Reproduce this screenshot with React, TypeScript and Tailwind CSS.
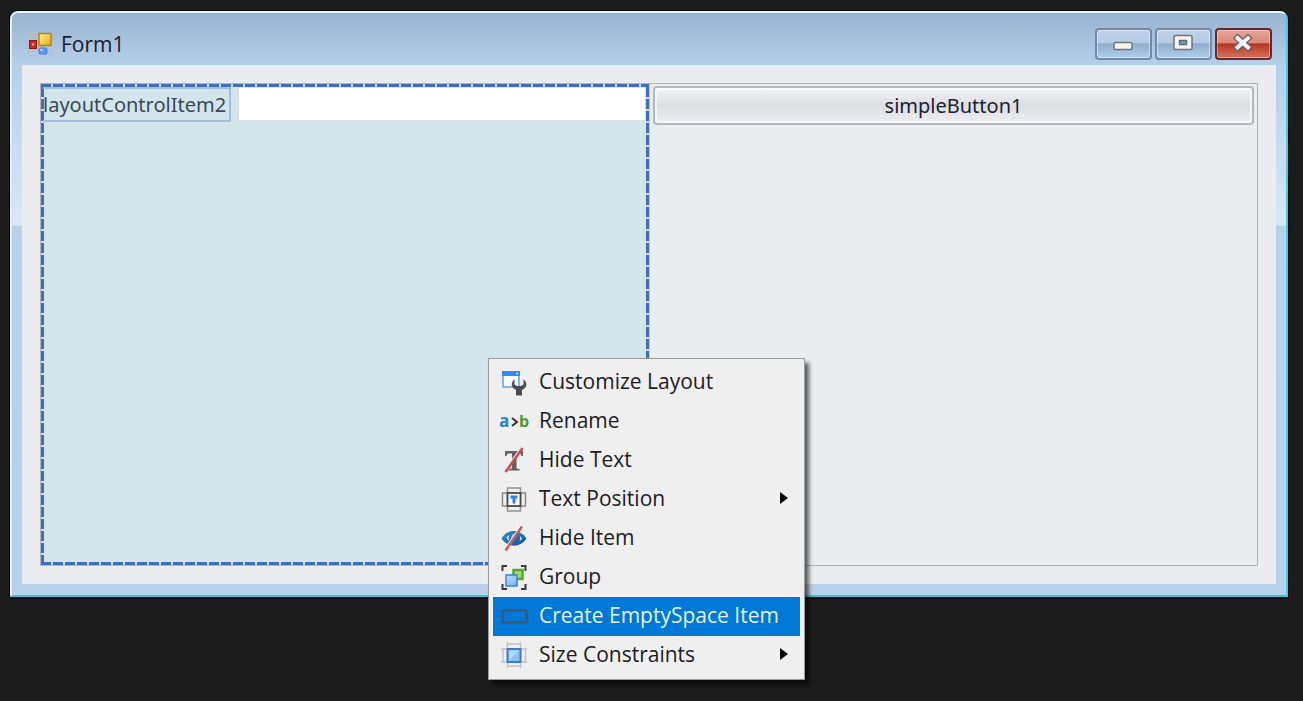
import type { ReactNode } from "react";

const FormIcon = () => (
  <svg width="24" height="24" viewBox="0 0 24 24" aria-hidden="true">
    <defs>
      <linearGradient id="form-yellow" x1="0" y1="0" x2="1" y2="1">
        <stop offset="0" stopColor="#fff0a0" />
        <stop offset="1" stopColor="#e9ab00" />
      </linearGradient>
    </defs>
    <path d="M.5 10V.5H10M.5 17v6.500H11M20 23.500h3.500V14" fill="none" stroke="#b9bcc0" strokeWidth="1" />
    <rect x="1.500" y="8.500" width="7" height="8" fill="#d8281c" stroke="#8f1510" />
    <rect x="4" y="11.500" width="2" height="2" fill="#f7b9a8" />
    <rect x="11" y="1.500" width="12" height="12" fill="url(#form-yellow)" stroke="#b98300" strokeWidth="1.500" />
    <rect x="11" y="16" width="8" height="6" rx="1" fill="#5d93ea" stroke="#4a7cd6" />
    <path d="M12 18h3" stroke="#c2dafc" strokeWidth="1.500" />
  </svg>
);

const CustomizeIcon = () => (
  <svg width="28" height="28" viewBox="0 0 28 28" aria-hidden="true">
    <rect x="3" y="4" width="16" height="15" fill="#f5faff" stroke="#5ba3f5" strokeWidth="1.500" />
    <path d="M2 3h18v5H2z" fill="#2f8bf2" />
    <path d="M16 5.500h2" stroke="#cfe5ff" strokeWidth="1.500" />
    <path
      d="M14.500 11.500c-3 2-3.500 6-1.500 8.200 1 1.100 2 1.800 3 2.300V27.500h6V22c1.200-.5 2.200-1.200 3.200-2.300 2-2.200 1.500-6.200-1.700-8.200v5l-2.500 1.500h-4l-2.500-1.500z"
      fill="#4c4c4e"
    />
  </svg>
);

const RenameIcon = () => (
  <svg width="30" height="28" viewBox="0 0 30 28" aria-hidden="true" className="font-['Open_Sans',sans-serif] font-bold">
    <text x="-1" y="20" fontSize="17" fill="#2480e8">a</text>
    <path d="M12 11l5 4-5 4" fill="none" stroke="#333" strokeWidth="2" />
    <text x="19" y="20" fontSize="16" fill="#4c9c2e">b</text>
  </svg>
);

const HideTextIcon = () => (
  <svg width="28" height="28" viewBox="0 0 28 28" aria-hidden="true">
    <path d="M5 5h18v5h-1.500c-.3-2-1-2.500-3-2.500h-2V21c0 1.500.5 2 3 2v1.500H9V23c2.500 0 3-.5 3-2V7.500H9.500c-2 0-2.700.5-3 2.500H5z" fill="#606062" />
    <path d="M21 2L4 26" stroke="#efefef" strokeWidth="2" />
    <path d="M22.500 2L5.500 26" stroke="#d24a4e" strokeWidth="2.500" />
  </svg>
);

const TextPositionIcon = () => (
  <svg width="28" height="28" viewBox="0 0 28 28" aria-hidden="true" fill="none">
    <rect x="7.500" y="3" width="13" height="23" stroke="#929292" strokeWidth="1.500" />
    <rect x="2.500" y="8" width="23" height="13" stroke="#8a8a8a" strokeWidth="1.500" />
    <rect x="7.500" y="8" width="13" height="13" fill="#f7f7f7" stroke="#4a4a4a" strokeWidth="1.800" />
    <path d="M10.500 10.500h7v3h-2v5h-3v-5h-2z" fill="#2682ee" />
  </svg>
);

const HideItemIcon = () => (
  <svg width="28" height="28" viewBox="0 0 28 28" aria-hidden="true">
    <defs>
      <linearGradient id="eye-blue" x1="0" y1="0" x2="1" y2="1">
        <stop offset="0" stopColor="#2c93d8" />
        <stop offset="1" stopColor="#174d91" />
      </linearGradient>
    </defs>
    <path d="M1.500 14.500C7 4.500 20 4.500 26.500 14.500 20.500 24 7.500 24 1.500 14.500z" fill="url(#eye-blue)" />
    <path d="M6.500 13.500c.7-1.200 1.700-2 2.700-2.500-.7 2-.7 4 0 5.800-1.200-.7-2.200-1.800-2.700-3.300zM22 14.500c-.6-1.300-1.300-2-2.200-2.600.5 1.700.4 3.500-.3 5 1.100-.5 1.900-1.300 2.500-2.400z" fill="#dceefb" />
    <path d="M12 11.500c1-1.500 2.500-2 3.500-1.500l-4 5c-.3-1.300 0-2.500.5-3.500z" fill="#a9d2f3" />
    <path d="M20.500 2.500L4 26" stroke="#efefef" strokeWidth="1.500" />
    <path d="M22 2.500L5.500 26.500" stroke="#ce5a60" strokeWidth="2.500" />
  </svg>
);

const GroupIcon = () => (
  <svg width="28" height="28" viewBox="0 0 28 28" aria-hidden="true">
    <defs>
      <linearGradient id="group-blue" x1="0" y1="0" x2="1" y2="1">
        <stop offset="0" stopColor="#c5e2ff" />
        <stop offset="1" stopColor="#6db0fb" />
      </linearGradient>
    </defs>
    <path d="M7 3H2.500v5M21 3h4.500v5M2.500 21v5H7M25.500 21v5H21" fill="none" stroke="#3b3b3b" strokeWidth="2" />
    <rect x="13.500" y="7" width="9" height="9" fill="#a5dc68" stroke="#55ad25" strokeWidth="2.500" />
    <rect x="6" y="12" width="11" height="11" fill="url(#group-blue)" stroke="#3e7fd6" strokeWidth="1.500" />
  </svg>
);

const EmptySpaceIcon = () => (
  <svg width="28" height="28" viewBox="0 0 28 28" aria-hidden="true">
    <rect x="2.500" y="8.500" width="24" height="12" fill="none" stroke="#3c566f" strokeWidth="2" />
  </svg>
);

const SizeIcon = () => (
  <svg width="28" height="28" viewBox="0 0 28 28" aria-hidden="true">
    <path d="M7.500 1v26M20.500 1v26M7.500 3h13M7.500 25h13M1 8h26M1 21h26M3 8v13M25.500 8v13" fill="none" stroke="#c4c4c4" strokeWidth="1.500" />
    <rect x="7.500" y="8" width="13" height="13" fill="#8cc2fd" stroke="#3d7bd0" strokeWidth="2" />
    <path d="M9 19.500V9.500h10z" fill="#b3d8fd" />
  </svg>
);

type MenuItem = { label: string; icon: ReactNode; submenu?: boolean; active?: boolean };

const menuItems: MenuItem[] = [
  { label: "Customize Layout", icon: <CustomizeIcon /> },
  { label: "Rename", icon: <RenameIcon /> },
  { label: "Hide Text", icon: <HideTextIcon /> },
  { label: "Text Position", icon: <TextPositionIcon />, submenu: true },
  { label: "Hide Item", icon: <HideItemIcon /> },
  { label: "Group", icon: <GroupIcon /> },
  { label: "Create EmptySpace Item", icon: <EmptySpaceIcon />, active: true },
  { label: "Size Constraints", icon: <SizeIcon />, submenu: true },
];

const ContextMenu = () => (
  <div
    role="menu"
    className="absolute left-[488px] top-[358px] w-[317px] border border-[#9b9b9b] bg-[#efefef] p-1 font-['Open_Sans',sans-serif] shadow-[4px_5px_4px_rgba(0,0,0,0.6)]"
  >
    {menuItems.map((item) => (
      <button
        key={item.label}
        type="button"
        role="menuitem"
        className={`flex h-[39px] w-full items-center pb-[2px] pl-[7px] pr-3 text-left text-[21px] ${
          item.active ? "bg-[#0078d7] text-[#e6f2fc]" : "text-[#1c1c22]"
        }`}
      >
        <span className="w-[39px] shrink-0">{item.icon}</span>
        <span className="flex-1 whitespace-nowrap">{item.label}</span>
        {item.submenu && (
          <svg width="8" height="14" viewBox="0 0 8 14" aria-hidden="true">
            <path d="M0 0l8 6-8 6z" fill="#000" />
          </svg>
        )}
      </button>
    ))}
  </div>
);

const captionButton =
  "flex h-8 w-[57px] items-center justify-center rounded border-2 border-[#7489a8] bg-[linear-gradient(#bed2e9_0%,#b5cbe5_45%,#91adcb_50%,#b3cee9_100%)] shadow-[inset_0_0_0_1px_rgba(255,255,255,0.45)]";

const TitleBar = () => (
  <header className="flex h-[52px] shrink-0 items-center justify-between bg-linear-to-b from-[#98b3d0] to-[#b7d0ea] pl-4 pr-[14px] pt-[9px]">
    <div className="flex items-center gap-[9px]">
      <FormIcon />
      <h1 className="font-['Open_Sans',sans-serif] text-[21px] leading-8 text-[#1c1c2c]">Form1</h1>
    </div>
    <div className="flex gap-[3px]">
      <button type="button" aria-label="Minimize" className={captionButton}>
        <svg width="22" height="20" viewBox="0 0 22 20">
          <rect x="1" y="8.500" width="18" height="7" rx="1.500" fill="#f4f4f4" stroke="#6b7482" strokeWidth="1.500" />
        </svg>
      </button>
      <button type="button" aria-label="Maximize" className={captionButton}>
        <svg width="22" height="20" viewBox="0 0 22 20">
          <rect x="1" y="1.500" width="18" height="14" rx="1.500" fill="#f4f4f4" stroke="#6b7482" strokeWidth="1.500" />
          <rect x="6.500" y="6.500" width="7" height="4" fill="#7b9abe" stroke="#5f6977" strokeWidth="1.500" />
        </svg>
      </button>
      <button
        type="button"
        aria-label="Close"
        className="flex h-8 w-[57px] items-center justify-center rounded border-2 border-[#6b2730] bg-[linear-gradient(#e8a79b_0%,#dd8878_45%,#b63620_50%,#d5745c_100%)] shadow-[inset_0_0_0_1px_rgba(255,255,255,0.35)]"
      >
        <svg width="22" height="20" viewBox="0 0 22 20">
          <path d="M4.500 4L15 13.500M15 4L4.500 13.500" fill="none" stroke="#6b5b68" strokeWidth="6.500" strokeLinecap="square" />
          <path d="M4.500 4L15 13.500M15 4L4.500 13.500" fill="none" stroke="#f4f4f4" strokeWidth="4" strokeLinecap="square" />
        </svg>
      </button>
    </div>
  </header>
);

/* Dashed outline of the selected layout item, one strip per edge */
const dashX = "h-[3px] shrink-0 bg-[repeating-linear-gradient(90deg,#3f6fb8_0_10px,#c9dbe9_10px_12px)]";
const dashY = "w-[3px] shrink-0 bg-[repeating-linear-gradient(180deg,#3f6fb8_0_10px,#c9dbe9_10px_12px)]";

const SelectedItem = () => (
  <div className="flex flex-col bg-[#d1e5eb]">
    <div className={dashX} />
    <div className="flex flex-1">
      <div className={dashY} />
      <div className="flex flex-1 items-start">
        <label
          htmlFor="layout-item-2"
          className="-ml-px flex h-[35px] w-[188px] shrink-0 items-center whitespace-nowrap border-2 border-l-0 border-[#9fc0e0] font-['Noto_Sans',sans-serif] text-[20px] text-[#3d4858]"
        >
          layoutControlItem2
        </label>
        <input id="layout-item-2" type="text" className="ml-[7px] h-[34px] min-w-0 flex-1 border border-[#dcdfe6] bg-white px-2 outline-none" />
      </div>
      <div className={dashY} />
    </div>
    <div className={dashX} />
  </div>
);

const App = () => (
  <main className="relative flex h-screen min-h-[701px] flex-col bg-[#1c1c1c] pb-[104px] pl-[10px] pr-[15px] pt-[11px]">
    <section className="flex flex-1 flex-col overflow-hidden rounded-t-lg border-2 border-b-[#2cc6dc] border-l-[#e4edf6] border-r-[#3ccdea] border-t-[#e9f0f6] bg-[linear-gradient(#b7d0ea_0,#b7d0ea_60px,#dbe8f6_212px,#b9d1ea_213px,#b9d0ea_100%)] shadow-[0_0_0_1px_#060606,1px_2px_1px_#060606]">
      <TitleBar />
      <div className="mx-[10px] mb-[11px] flex flex-1 bg-[#ebecf0] p-[18px]">
        <div className="grid flex-1 grid-cols-2 border border-[#b4b4b6]">
          <SelectedItem />
          <div className="border-l border-[#c4c4c6] px-[3px] pt-[2px]">
            <button
              type="button"
              className="h-[39px] w-full rounded border-2 border-[#b5b7c0] bg-[linear-gradient(#f3f4f6_0%,#dcdee3_50%,#eeeff3_100%)] font-['Noto_Sans',sans-serif] text-[20px] leading-8 text-[#202030] shadow-[inset_0_0_0_2px_rgba(255,255,255,0.6)]"
            >
              simpleButton1
            </button>
          </div>
        </div>
      </div>
    </section>
    <ContextMenu />
  </main>
);

export default App;
